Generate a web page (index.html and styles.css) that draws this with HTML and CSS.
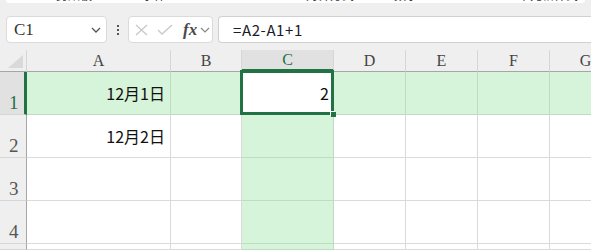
FILE: index.html
```html
<!DOCTYPE html>
<html lang="zh-CN">

<head>
  <meta charset="utf-8">
  <title>工作表</title>
  <link rel="stylesheet" href="styles.css">
</head>

<body>
  <div class="ribbon-edge">
    <span class="grp grp-clip">剪贴板</span>
    <span class="grp grp-font">字体</span>
    <span class="grp grp-align">对齐方式</span>
    <span class="grp grp-num">数字</span>
    <span class="grp grp-style">单元格样式</span>
  </div>

  <div class="formula-bar">
    <div class="name-box">
      <span>C1</span>
      <svg width="10" height="6" viewBox="0 0 10 6"><polyline points="1,1 5,5 9,1" fill="none" stroke="#555" stroke-width="1.3"/></svg>
    </div>
    <div class="bar-grip"><i></i><i></i><i></i></div>
    <div class="fx-box">
      <svg width="13" height="12" viewBox="0 0 13 12"><path d="M1 1 L12 11 M12 1 L1 11" stroke="#c8c8c8" stroke-width="1.3"/></svg>
      <svg width="16" height="12" viewBox="0 0 16 12"><polyline points="1,6 5,10 15,1" fill="none" stroke="#c8c8c8" stroke-width="1.3"/></svg>
      <span class="fx">fx</span>
      <svg width="10" height="6" viewBox="0 0 10 6"><polyline points="1,1 5,5 9,1" fill="none" stroke="#888" stroke-width="1.2"/></svg>
    </div>
    <div class="formula-input">=A2-A1+1</div>
  </div>

  <div class="sheet">
    <div class="hd corner">
      <svg width="15" height="13" viewBox="0 0 15 13"><polygon points="15,0 15,13 0,13" fill="#d9d9d9"/></svg>
    </div>
    <div class="hd">A</div>
    <div class="hd">B</div>
    <div class="hd on">C</div>
    <div class="hd">D</div>
    <div class="hd">E</div>
    <div class="hd">F</div>
    <div class="hd">G</div>

    <div class="rh on">1</div>
    <div class="c hl">12月1日</div>
    <div class="c hl"></div>
    <div class="c active">2</div>
    <div class="c hl"></div>
    <div class="c hl"></div>
    <div class="c hl"></div>
    <div class="c hl"></div>

    <div class="rh">2</div>
    <div class="c">12月2日</div>
    <div class="c"></div>
    <div class="c hl"></div>
    <div class="c"></div>
    <div class="c"></div>
    <div class="c"></div>
    <div class="c"></div>

    <div class="rh">3</div>
    <div class="c"></div>
    <div class="c"></div>
    <div class="c hl"></div>
    <div class="c"></div>
    <div class="c"></div>
    <div class="c"></div>
    <div class="c"></div>

    <div class="rh">4</div>
    <div class="c"></div>
    <div class="c"></div>
    <div class="c hl"></div>
    <div class="c"></div>
    <div class="c"></div>
    <div class="c"></div>
    <div class="c"></div>

    <div class="rh"></div>
    <div class="c"></div>
    <div class="c"></div>
    <div class="c hl"></div>
    <div class="c"></div>
    <div class="c"></div>
    <div class="c"></div>
    <div class="c"></div>
  </div>
</body>

</html>
```

FILE: styles.css
```css
body {
  width: 591px;
  height: 250px;
  margin: 0;
  overflow: hidden;
  background: #efefef;
  font-family: "Noto Sans CJK SC", "Noto Sans", sans-serif;
}

/* bottom of the ribbon, scrolled off the top */
.ribbon-edge {
  display: flex;
  height: 3px;
  margin: 0 6px;
  background: #fff;
  border-radius: 0 0 6px 6px;
  overflow: hidden;
}

.grp {
  font-size: 12px;
  line-height: 14px;
  margin-top: -12px;
  color: #333;
  white-space: nowrap;
}

.grp-clip { margin-left: 50px; }
.grp-font { margin-left: 50px; }
.grp-align { margin-left: 140px; }
.grp-num { margin-left: 40px; }
.grp-style { margin-left: 100px; }

/* name box + formula bar */
.formula-bar {
  display: flex;
  height: 27px;
  margin-top: 13px;
}

.name-box {
  width: 101px;
  margin-left: 6px;
  box-sizing: border-box;
  display: flex;
  align-items: center;
  justify-content: space-between;
  padding: 0 5px 0 7px;
  background: #fff;
  border: 1px solid #dadada;
  border-radius: 4px;
  font-family: "Liberation Serif", serif;
  font-size: 17px;
  color: #333;
}

.bar-grip {
  width: 21px;
  display: flex;
  flex-direction: column;
  align-items: center;
  justify-content: center;
  gap: 2px;
}

.bar-grip i {
  width: 2px;
  height: 2px;
  background: #555;
}

.fx-box {
  width: 85px;
  box-sizing: border-box;
  display: flex;
  align-items: center;
  gap: 9px;
  padding-left: 6px;
  background: #fff;
  border: 1px solid #dadada;
  border-radius: 4px;
}

.fx-box .fx {
  margin-left: 1px;
  margin-right: -6px;
  font-family: "Liberation Serif", serif;
  font-style: italic;
  font-weight: bold;
  font-size: 17px;
  color: #4a4a4a;
}

.formula-input {
  flex: 1;
  margin-left: 5px;
  display: flex;
  align-items: center;
  padding-left: 14px;
  background: #fff;
  border: 1px solid #d0d0d0;
  border-right: none;
  border-radius: 4px 0 0 4px;
  font-size: 15px;
  letter-spacing: 0.6px;
  color: #1a1a2a;
}

/* grid: column G runs on past the window edge */
.sheet {
  display: grid;
  grid-template-columns: 27px 144px 71px 92px 72px 72px 72px 72px;
  grid-template-rows: 22px repeat(4, 43px) 1fr;
  height: 200px;
  margin-top: 7px;
  overflow: hidden;
  background: #fff;
}

.sheet > div {
  box-sizing: border-box;
  min-height: 0;
}

.hd {
  background: #efefef;
  border-right: 1px solid #d6d6d6;
  border-bottom: 1px solid #a6a6a6;
  font-family: "Liberation Serif", serif;
  font-size: 16px;
  line-height: 22px;
  text-align: center;
  color: #444;
}

.hd.on {
  background: #e1e1e1;
  color: #217346;
  border-bottom: 3px solid #217346;
  line-height: 20px;
}

.corner {
  display: flex;
  align-items: flex-end;
  justify-content: flex-end;
  padding: 0 3px 3px 0;
}

.corner svg {
  display: block;
}

.rh {
  display: flex;
  align-items: flex-end;
  padding: 0 0 0 9px;
  background: #efefef;
  border-right: 1px solid #a6a6a6;
  border-bottom: 1px solid #d6d6d6;
  font-family: "Liberation Serif", serif;
  font-size: 19px;
  line-height: 22px;
  color: #555;
}

.rh.on {
  background: #e1e1e1;
  color: #217346;
  border-right: 3px solid #217346;
}

.c {
  display: flex;
  align-items: center;
  justify-content: flex-end;
  padding-right: 5px;
  border-right: 1px solid #dadada;
  border-bottom: 1px solid #dadada;
  font-size: 16px;
  color: #111;
}

.c.hl {
  background: #d6f4d9;
  border-color: #bedcc1;
}

.c.active {
  position: relative;
  background: #fff;
  border-color: #bedcc1;
  padding-right: 4px;
}

/* selection frame and fill handle */
.c.active::after {
  content: "";
  position: absolute;
  top: -2px;
  left: -2px;
  right: -1px;
  bottom: -1px;
  border: 3px solid #217346;
}

.c.active::before {
  content: "";
  position: absolute;
  right: -3px;
  bottom: -3px;
  width: 5px;
  height: 5px;
  background: #217346;
  box-shadow: -1px -1px 0 #fff;
  z-index: 1;
}
```
